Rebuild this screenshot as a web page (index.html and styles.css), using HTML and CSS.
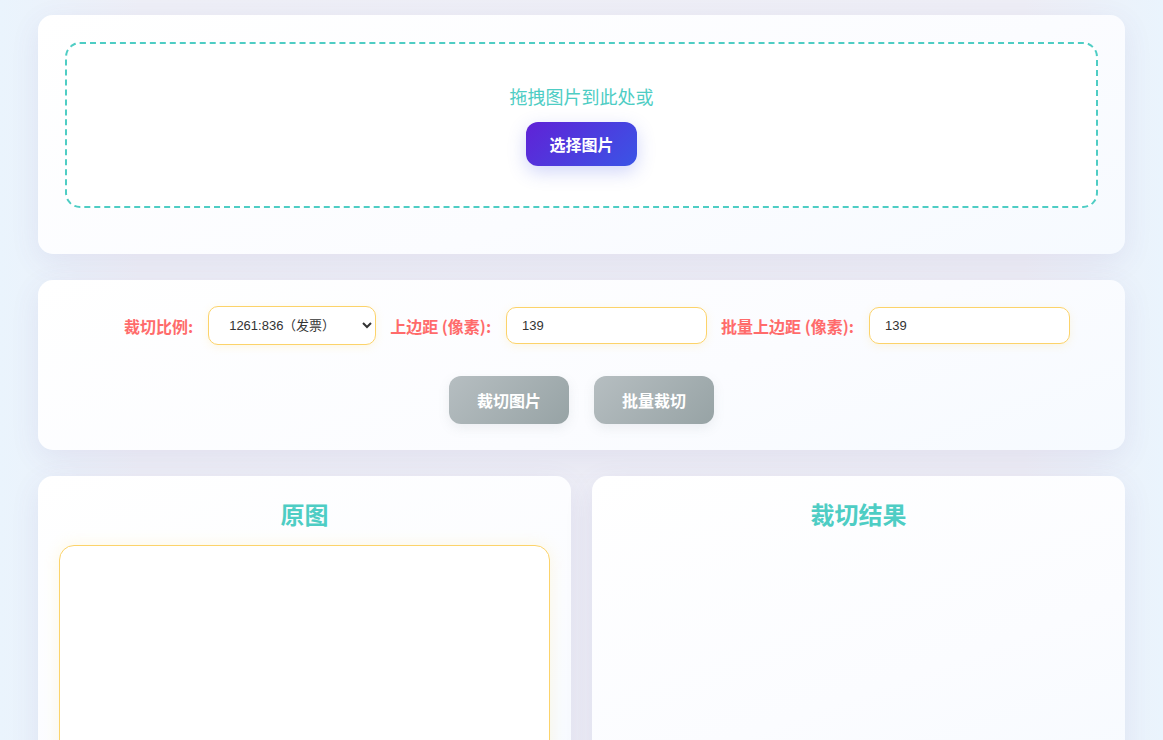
FILE: index.html
```html
<!DOCTYPE html>
<html lang="zh-CN">
<head>
<meta charset="utf-8">
<title>图片裁切</title>
<link rel="stylesheet" href="styles.css">
</head>
<body>
<div class="container">
  <section class="card upload-card">
    <div class="drop-zone">
      <p class="drop-text">拖拽图片到此处或</p>
      <button class="btn btn-primary">选择图片</button>
    </div>
  </section>

  <section class="card controls-card">
    <div class="control-row">
      <div class="group">
        <label class="label">裁切比例:</label>
        <select class="field select">
          <option>1261:836（发票）</option>
        </select>
      </div>
      <div class="group">
        <label class="label">上边距 (像素):</label>
        <input class="field input" type="text" value="139">
      </div>
      <div class="group">
        <label class="label">批量上边距 (像素):</label>
        <input class="field input" type="text" value="139">
      </div>
    </div>
    <div class="action-row">
      <button class="btn btn-gray">裁切图片</button>
      <button class="btn btn-gray">批量裁切</button>
    </div>
  </section>

  <div class="preview-grid">
    <section class="card preview-card">
      <h2 class="preview-title">原图</h2>
      <div class="preview-box"></div>
    </section>
    <section class="card preview-card">
      <h2 class="preview-title">裁切结果</h2>
    </section>
  </div>
</div>
</body>
</html>
```

FILE: styles.css
```css
* { box-sizing: border-box; }

html, body {
  margin: 0;
  padding: 0;
}

body {
  background: linear-gradient(90deg, #eaf4fd 0%, #eeeff7 12%, #eeeef6 88%, #eaf4fd 100%);
  font-family: "Noto Sans CJK SC", "Noto Sans", sans-serif;
  min-height: 740px;
  overflow: hidden;
}

.container {
  width: 1087px;
  margin: 0 auto;
  padding-top: 15px;
}

.card {
  background: linear-gradient(160deg, #ffffff 0%, #fbfcff 60%, #f6faff 100%);
  border-radius: 15px;
  box-shadow: 0 8px 30px rgba(90, 80, 160, 0.09);
}

.upload-card {
  padding: 27px 27px 46px;
}

.drop-zone {
  border: 2px dashed #4ecdc4;
  border-radius: 15px;
  padding: 40px 20px;
  display: flex;
  flex-direction: column;
  align-items: center;
  background: #ffffff;
}

.drop-text {
  margin: 0 0 14px;
  color: #4ecdc4;
  font-size: 18px;
  line-height: 24px;
}

.btn {
  border: none;
  border-radius: 12px;
  color: #ffffff;
  font-family: "Noto Sans CJK SC", sans-serif;
  font-weight: 700;
  font-size: 16px;
  cursor: pointer;
}

.btn-primary {
  width: 111px;
  height: 44px;
  background: linear-gradient(135deg, #6022d6 0%, #3a55e6 100%);
  box-shadow: 0 6px 18px rgba(70, 90, 230, 0.25);
}

.controls-card {
  margin-top: 26px;
  padding: 26px 26px 26px;
}

.control-row {
  display: flex;
  justify-content: center;
  align-items: center;
  gap: 14px;
  padding-left: 31px;
}

.group {
  display: flex;
  align-items: center;
  gap: 15px;
}

.label {
  color: #ff6b6b;
  font-weight: 700;
  font-size: 16px;
  white-space: nowrap;
}

.field {
  border: 1px solid #fcd36a;
  border-radius: 10px;
  background: #ffffff;
  font-family: "Liberation Sans", Arial, sans-serif;
  font-size: 13px;
  color: #333333;
  box-shadow: 0 2px 8px rgba(255, 214, 100, 0.18);
  outline: none;
}

.select {
  width: 168px;
  height: 39px;
  padding: 0 8px 0 16px;
}

.input {
  width: 201px;
  height: 37px;
  padding: 0 15px;
}

.action-row {
  display: flex;
  justify-content: center;
  gap: 25px;
  margin-top: 31px;
}

.btn-gray {
  width: 120px;
  height: 48px;
  background: linear-gradient(135deg, #b6bec1 0%, #97a3a5 100%);
  box-shadow: 0 4px 12px rgba(120, 130, 140, 0.12);
}

.preview-grid {
  margin-top: 26px;
  display: grid;
  grid-template-columns: 1fr 1fr;
  gap: 21px;
}

.preview-card {
  padding: 22px 21px 0 21px;
  min-height: 300px;
}

.preview-title {
  margin: 0 0 15px;
  text-align: center;
  color: #4ecdc4;
  font-size: 24px;
  line-height: 32px;
  font-weight: 700;
}

.preview-box {
  height: 260px;
  border: 1px solid #fcd36a;
  border-radius: 15px;
  background: #ffffff;
  box-shadow: 0 0 16px rgba(255, 225, 110, 0.2);
}
```
